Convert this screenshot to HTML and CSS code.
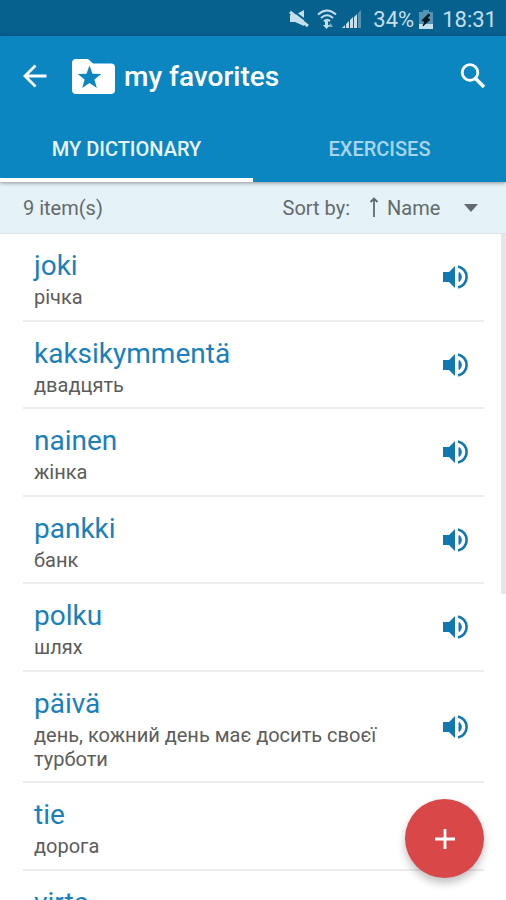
FILE: index.html
```html
<!DOCTYPE html>
<html lang="en">
<head>
<meta charset="utf-8">
<meta name="viewport" content="width=device-width, initial-scale=1">
<title>my favorites</title>
<link rel="stylesheet" href="styles.css">
</head>
<body>
<svg class="sprite" aria-hidden="true">
  <symbol id="volume" viewBox="0 0 28 26">
    <path d="M1 8h6l6-6v22l-6-6H1z" fill="currentColor"/>
    <path d="M17 8.500c3 1.500 3 7.500 0 9z" fill="currentColor" stroke="currentColor" stroke-width="1"/>
    <path d="M16 2.500a10.700 10.700 0 0 1 0 21" fill="none" stroke="currentColor" stroke-width="2.600"/>
  </symbol>
</svg>
<div class="app">
  <div class="status">
    <svg class="status-icon mute" viewBox="0 0 20 18" aria-hidden="true">
      <path d="M1 5h5l9-5v16L6 12H1z" fill="currentColor"/>
      <path d="M3 0l17 13" stroke="#07618f" stroke-width="2"/>
      <path d="M1 2l18 14" stroke="currentColor" stroke-width="3"/>
    </svg>
    <svg class="status-icon wifi" viewBox="0 0 20 20" aria-hidden="true">
      <g fill="none" stroke="currentColor" stroke-width="2">
        <path d="M1 5.500q9-8 18 0"/><path d="M4 9q6-5.500 12 0"/><path d="M7 12.200q3-2.800 6 0"/>
      </g>
      <path d="M8 12h3v4h2l-3.500 4L6 16h2z" fill="currentColor"/><path d="M11 18l2.500-4 2.500 4z" fill="currentColor" opacity=".6"/>
    </svg>
    <svg class="status-icon signal" viewBox="0 0 20 18" aria-hidden="true">
      <path d="M0 18l3-3v3zM4 14l3-3v7H4zM8 10l3-3v11H8zM12 7l3-3v14h-3z" fill="currentColor"/>
      <path d="M16 3l3-3v18h-3z" fill="currentColor" opacity=".4"/>
    </svg>
    <span class="charge">34%</span>
    <svg class="status-icon battery" viewBox="0 0 14 19" aria-hidden="true">
      <path d="M4 0h6v2h4v17H0V2h4z" fill="currentColor" opacity=".4"/>
      <path d="M0 14h14v5H0z" fill="currentColor"/>
      <path d="M9.500 4L3 10.500l3 1L4 16l7-6.500-3-1L11 5z" fill="#0a1820" stroke="#0a1820"/>
    </svg>
    <span class="clock">18:31</span>
  </div>

  <header class="header">
    <div class="toolbar">
      <a class="icon-button back" href="#" aria-label="Back">
        <svg viewBox="0 0 24 24" width="24" height="24" aria-hidden="true"><path d="M23.500 12H2M12.500 1.500L2 12l10.500 10.500" fill="none" stroke="currentColor" stroke-width="2.800"/></svg>
      </a>
      <svg class="folder" viewBox="0 0 43 35" aria-hidden="true">
        <path d="M4 0h12l5 4.500h18a4 4 0 0 1 4 4V31a4 4 0 0 1-4 4H4a4 4 0 0 1-4-4V4a4 4 0 0 1 4-4z" fill="#fff"/>
        <path d="M17.500 6.500l3 8.300 8.700.3-6.800 5.300 2.400 8.600-7.300-4.900-7.300 4.900 2.400-8.600-6.800-5.300 8.700-.3z" fill="#0b86c1"/>
      </svg>
      <h1 class="title">my favorites</h1>
      <button class="icon-button search" type="button" aria-label="Search">
        <svg viewBox="0 0 26 26" width="26" height="26" aria-hidden="true"><g fill="none" stroke="currentColor"><circle cx="10" cy="9.500" r="7.800" stroke-width="2.800"/><path d="M15.500 15.500l8.500 8.500" stroke-width="3.600"/></g></svg>
      </button>
    </div>
    <nav class="tabs">
      <a class="tab active" href="#" aria-current="page">MY DICTIONARY</a>
      <a class="tab" href="#">EXERCISES</a>
    </nav>
  </header>

  <div class="sortbar">
    <span class="count">9 item(s)</span>
    <label class="sort-label" for="sort">Sort by:</label>
    <svg class="direction" viewBox="0 0 10 21" aria-hidden="true"><path d="M5 1v19M1.500 5L5 1.500 8.500 5" fill="none" stroke="currentColor" stroke-width="1.800"/></svg>
    <span class="select-wrap">
      <select id="sort" class="sort"><option>Name</option></select>
      <svg class="caret" viewBox="0 0 14 8" aria-hidden="true"><path d="M0 0h14L7 8z" fill="currentColor"/></svg>
    </span>
  </div>

  <main class="content">
    <ul class="words">
      <li class="word"><div class="text"><h2 class="term">joki</h2><p class="meaning" lang="uk">річка</p></div><button class="speak" type="button" aria-label="Listen"><svg><use href="#volume"/></svg></button></li>
      <li class="word"><div class="text"><h2 class="term">kaksikymmentä</h2><p class="meaning" lang="uk">двадцять</p></div><button class="speak" type="button" aria-label="Listen"><svg><use href="#volume"/></svg></button></li>
      <li class="word"><div class="text"><h2 class="term">nainen</h2><p class="meaning" lang="uk">жінка</p></div><button class="speak" type="button" aria-label="Listen"><svg><use href="#volume"/></svg></button></li>
      <li class="word"><div class="text"><h2 class="term">pankki</h2><p class="meaning" lang="uk">банк</p></div><button class="speak" type="button" aria-label="Listen"><svg><use href="#volume"/></svg></button></li>
      <li class="word"><div class="text"><h2 class="term">polku</h2><p class="meaning" lang="uk">шлях</p></div><button class="speak" type="button" aria-label="Listen"><svg><use href="#volume"/></svg></button></li>
      <li class="word"><div class="text"><h2 class="term">päivä</h2><p class="meaning" lang="uk">день, кожний день має досить своєї турботи</p></div><button class="speak" type="button" aria-label="Listen"><svg><use href="#volume"/></svg></button></li>
      <li class="word"><div class="text"><h2 class="term">tie</h2><p class="meaning" lang="uk">дорога</p></div><button class="speak" type="button" aria-label="Listen"><svg><use href="#volume"/></svg></button></li>
      <li class="word"><div class="text"><h2 class="term">virta</h2></div></li>
    </ul>
  </main>
  <button class="fab" type="button" aria-label="Add word">
    <svg viewBox="0 0 20 20" width="20" height="20" aria-hidden="true"><path d="M10 0v20M0 10h20" stroke="currentColor" stroke-width="2.800"/></svg>
  </button>
</div>
</body>
</html>
```
FILE: styles.css
```css
* {
  box-sizing: border-box;
}

body {
  margin: 0;
  font-family: Roboto, "Liberation Sans", sans-serif;
  background: #fff;
}

h1, h2, p, ul {
  margin: 0;
  padding: 0;
}

a {
  color: inherit;
  text-decoration: none;
}

button {
  border: 0;
  padding: 0;
  background: none;
  color: inherit;
}

svg {
  display: block;
  flex: none;
}

.sprite {
  position: absolute;
  width: 0;
  height: 0;
}

.app {
  position: relative;
  display: flex;
  flex-direction: column;
  height: 100vh;
  overflow: hidden;
}

.status {
  display: flex;
  flex: none;
  align-items: center;
  justify-content: flex-end;
  height: 36px;
  padding: 2px 9px 0 0;
  background: #07618f;
  color: #c5dfec;
  font-size: 22px;
}

.mute {
  width: 20px;
  height: 18px;
  margin-right: 8px;
}

.wifi {
  width: 20px;
  height: 20px;
  margin-right: 5px;
}

.signal {
  width: 20px;
  height: 18px;
  margin-right: 11px;
}

.battery {
  width: 14px;
  height: 19px;
  margin: 0 9px 0 5px;
}

.header {
  position: relative;
  flex: none;
  background: #0b86c1;
  color: #fff;
  box-shadow: 0 1px 4px rgba(0, 0, 0, .4);
}

.toolbar {
  display: flex;
  align-items: center;
  height: 80px;
  padding: 0 20px 0 23px;
}

.folder {
  width: 43px;
  height: 35px;
  margin: 0 9px 0 25px;
}

.title {
  flex: 1;
  font-size: 28px;
  font-weight: 500;
}

.tabs {
  display: flex;
  height: 66px;
}

.tab {
  flex: 1;
  padding-top: 4px;
  border-bottom: 4px solid transparent;
  color: #a9d5ee;
  font-size: 20px;
  font-weight: 500;
  line-height: 58px;
  text-align: center;
}

.tab.active {
  border-color: #fff;
  color: #e8f5fc;
}

.sortbar {
  display: flex;
  flex: none;
  align-items: center;
  height: 52px;
  padding: 0 28px 0 23px;
  border-bottom: 1px solid #dbe3e6;
  background: #e5f2f8;
  color: #646a6d;
  font-size: 20px;
}

.count {
  flex: 1;
}

.direction {
  width: 10px;
  height: 21px;
  margin: 0 8px 0 19px;
}

.select-wrap {
  position: relative;
  display: flex;
  align-items: center;
}

.sort {
  width: 91px;
  padding: 0;
  border: 0;
  appearance: none;
  background: none;
  color: inherit;
  font: inherit;
}

.caret {
  position: absolute;
  right: 0;
  width: 14px;
  height: 8px;
  pointer-events: none;
}

.content {
  position: relative;
  flex: 1;
  min-height: 0;
  overflow: hidden;
}

/* scroll thumb */
.content::after {
  content: "";
  position: absolute;
  top: 0;
  right: 0;
  width: 5px;
  height: 54%;
  background: #e6e6e6;
}

.words {
  padding: 0 22px 0 23px;
  list-style: none;
}

.word {
  display: flex;
  align-items: center;
  padding: 0 14px 0 11px;
  border-bottom: 2px solid #ececec;
}

.text {
  flex: 1;
  padding: 13px 0 11px;
}

.word:nth-child(even) .text {
  padding-bottom: 10px;
}

.term {
  margin-bottom: 1px;
  color: #1a7fba;
  font-size: 28px;
  font-weight: 400;
  line-height: 37px;
}

.meaning {
  max-width: 360px;
  color: #5c5c5c;
  font-size: 20px;
  line-height: 24px;
}

.speak {
  color: #1478b0;
}

.speak svg {
  width: 28px;
  height: 26px;
}

.fab {
  position: absolute;
  right: 22px;
  bottom: 22px;
  display: grid;
  place-items: center;
  width: 79px;
  height: 79px;
  border-radius: 50%;
  background: #d94749;
  color: #fff;
  box-shadow: 0 5px 8px rgba(0, 0, 0, .25);
}
```
